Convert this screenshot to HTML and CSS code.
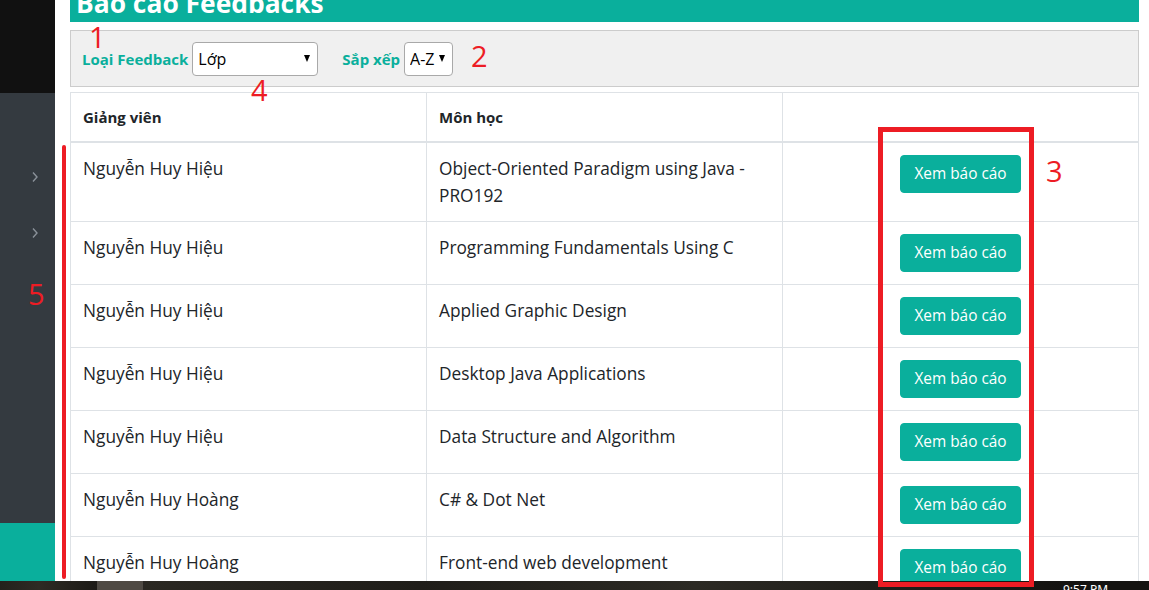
FILE: index.html
```html
<!DOCTYPE html>
<html lang="vi">
<head>
<meta charset="utf-8">
<title>Báo cáo Feedbacks</title>
<link rel="stylesheet" href="styles.css">
</head>
<body>
<div class="screen">
  <div class="app">
    <aside class="sidebar">
      <div class="sb-top"></div>
      <nav class="sb-menu">
        <div class="sb-item"><svg class="chev" width="8" height="12" viewBox="0 0 8 12"><polyline points="2,1.5 6,6 2,10.5" fill="none" stroke="#8a9199" stroke-width="1.4"/></svg></div>
        <div class="sb-item"><svg class="chev" width="8" height="12" viewBox="0 0 8 12"><polyline points="2,1.5 6,6 2,10.5" fill="none" stroke="#8a9199" stroke-width="1.4"/></svg></div>
      </nav>
      <div class="sb-bottom"></div>
    </aside>
    <main class="content">
      <div class="title-bar"><h2 class="title">Báo cáo Feedbacks</h2></div>
      <div class="filter-bar">
        <label class="f-label" for="loai">Loại Feedback</label>
        <div class="sel sel-wide"><select id="loai"><option>Lớp</option></select></div>
        <label class="f-label f-gap" for="sort">Sắp xếp</label>
        <div class="sel sel-narrow"><select id="sort"><option>A-Z</option></select></div>
      </div>
      <table class="fb-table">
        <thead>
          <tr><th>Giảng viên</th><th>Môn học</th><th></th></tr>
        </thead>
        <tbody>
          <tr><td>Nguyễn Huy Hiệu</td><td>Object-Oriented Paradigm using Java - PRO192</td><td class="act"><button class="btn">Xem báo cáo</button></td></tr>
          <tr><td>Nguyễn Huy Hiệu</td><td>Programming Fundamentals Using C</td><td class="act"><button class="btn">Xem báo cáo</button></td></tr>
          <tr><td>Nguyễn Huy Hiệu</td><td>Applied Graphic Design</td><td class="act"><button class="btn">Xem báo cáo</button></td></tr>
          <tr><td>Nguyễn Huy Hiệu</td><td>Desktop Java Applications</td><td class="act"><button class="btn">Xem báo cáo</button></td></tr>
          <tr><td>Nguyễn Huy Hiệu</td><td>Data Structure and Algorithm</td><td class="act"><button class="btn">Xem báo cáo</button></td></tr>
          <tr><td>Nguyễn Huy Hoàng</td><td>C# &amp; Dot Net</td><td class="act"><button class="btn">Xem báo cáo</button></td></tr>
          <tr><td>Nguyễn Huy Hoàng</td><td>Front-end web development</td><td class="act"><button class="btn">Xem báo cáo</button></td></tr>
        </tbody>
      </table>
    </main>
  </div>
  <div class="taskbar">
    <div class="tb-dark"></div>
    <div class="tb-app"></div>
    <div class="tb-fill"></div>
    <div class="tb-clock">9:57 PM</div>
  </div>

  <div class="mark n1">1</div>
  <div class="mark n2">2</div>
  <div class="mark n3">3</div>
  <div class="mark n4">4</div>
  <div class="mark n5">5</div>
  <div class="red-line"></div>
  <div class="red-box"></div>
</div>
</body>
</html>
```

FILE: styles.css
```css
* { box-sizing: border-box; }
html, body { margin: 0; padding: 0; }
body {
  width: 1149px;
  height: 590px;
  overflow: hidden;
  font-family: "Open Sans", "Noto Sans", "Liberation Sans", sans-serif;
  color: #212529;
  background: #fff;
}
.screen {
  position: relative;
  width: 1149px;
  height: 590px;
  display: flex;
  flex-direction: column;
  overflow: hidden;
}
.app {
  display: flex;
  height: 581px;
}
.sidebar {
  width: 55px;
  flex: none;
  display: flex;
  flex-direction: column;
}
.sb-top { height: 93px; background: #111111; }
.sb-menu {
  flex: 1;
  background: #343a40;
  padding-top: 56px;
}
.sb-item {
  height: 56px;
  display: flex;
  align-items: center;
  justify-content: flex-end;
  padding-right: 16px;
}
.sb-bottom { height: 58px; background: #0aaf9c; }

.content {
  flex: 1;
  background: #fff;
  padding: 0 10px 0 15px;
  overflow: hidden;
}
.title-bar {
  height: 22px;
  background: #0aaf9c;
  overflow: hidden;
  padding-left: 6px;
}
.title {
  margin: -12px 0 0 0;
  font-size: 26.4px;
  line-height: 30px;
  font-weight: 700;
  color: #fff;
  white-space: nowrap;
}
.filter-bar {
  margin-top: 8px;
  height: 57px;
  background: #f0f0f0;
  border: 1px solid #cccccc;
  display: flex;
  align-items: center;
  padding-left: 11px;
}
.f-label {
  font-size: 15px;
  font-weight: 700;
  color: #0aaf9c;
  margin-right: 4px;
}
.f-gap { margin-left: 24px; }
.sel {
  position: relative;
  height: 34px;
}
.sel-wide { width: 126px; }
.sel-narrow { width: 49px; }
.sel select {
  -webkit-appearance: none;
  appearance: none;
  width: 100%;
  height: 100%;
  border: 1px solid #a9a9a9;
  border-radius: 4px;
  background: #fff;
  font-family: "Open Sans", "Noto Sans", sans-serif;
  font-size: 16px;
  color: #000;
  padding: 0 0 0 5px;
}
.sel::after {
  content: "";
  position: absolute;
  right: 8px;
  top: 13px;
  border-left: 3.5px solid transparent;
  border-right: 3.5px solid transparent;
  border-top: 7px solid #000;
  pointer-events: none;
}

.fb-table {
  margin-top: 5px;
  width: 100%;
  border-collapse: collapse;
  table-layout: fixed;
}
.fb-table th, .fb-table td {
  border: 1px solid #dee2e6;
  padding: 12px;
  text-align: left;
  vertical-align: top;
}
.fb-table th {
  font-size: 15px;
  line-height: 24px;
  font-weight: 700;
  border-bottom: 2px solid #dee2e6;
}
.fb-table td {
  font-size: 17.3px;
  line-height: 27px;
}
.fb-table td.act { text-align: center; }
.btn {
  display: inline-block;
  height: 38px;
  padding: 0 13px;
  border: 1px solid #0aaf9c;
  border-radius: 4px;
  background: #0aaf9c;
  color: #fff;
  font-family: "Open Sans", "Noto Sans", sans-serif;
  font-size: 15.4px;
  line-height: 36px;
  vertical-align: top;
}

.taskbar {
  height: 9px;
  display: flex;
  background: #1d1b18;
  overflow: hidden;
}
.tb-dark {
  width: 97px;
  background: linear-gradient(90deg, #23211c, #2e2b24 40%, #1c1a16);
}
.tb-app { width: 48px; background: #4f4a44; border-right: 2px solid #2a2723; }
.tb-fill {
  flex: 1;
  background: linear-gradient(90deg, #2a2822, #1f1d19 30%, #2c2a24 60%, #141311);
}
.tb-clock {
  width: 86px;
  color: #fff;
  font-family: "Noto Sans", sans-serif;
  font-size: 12px;
  line-height: 18px;
  padding-left: 0;
  background: #141311;
}

.mark {
  position: absolute;
  color: #ed1c24;
  font-family: "Open Sans", "Noto Sans", sans-serif;
  font-size: 29px;
  line-height: 1;
}
.n1 { left: 89px; top: 22px; }
.n2 { left: 471px; top: 41px; }
.n3 { left: 1046px; top: 156px; }
.n4 { left: 251px; top: 75px; }
.n5 { left: 28px; top: 279px; }
.red-line {
  position: absolute;
  left: 62px;
  top: 145px;
  width: 4px;
  height: 434px;
  background: #ed1c24;
  border-radius: 2px;
}
.red-box {
  position: absolute;
  left: 878px;
  top: 127px;
  width: 156px;
  height: 460px;
  border: 5px solid #ed1c24;
}
```
